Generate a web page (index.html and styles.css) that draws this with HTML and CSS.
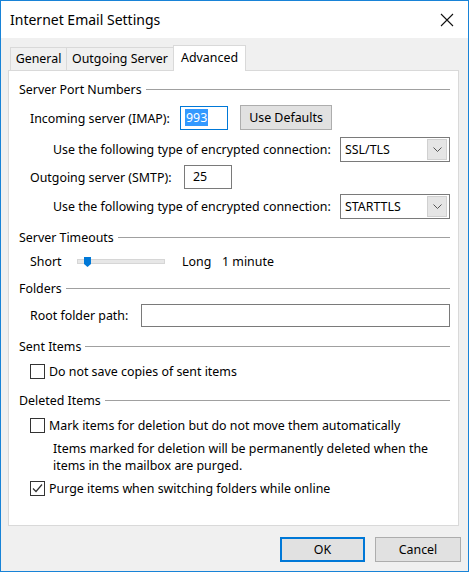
FILE: index.html
```html
<!DOCTYPE html>
<html>
<head>
<meta charset="utf-8">
<link rel="stylesheet" href="styles.css">
</head>
<body>
<div class="window">
  <div class="titlebar">
    <span class="title">Internet Email Settings</span>
    <svg class="close" width="14" height="14" viewBox="0 0 14 14"><path d="M1 1 L13 13 M13 1 L1 13" stroke="#111" stroke-width="1.1" fill="none"/></svg>
  </div>
  <div class="content">
    <div class="tabs">
      <div class="tab t-general">General</div>
      <div class="tab t-outgoing">Outgoing Server</div>
      <div class="tab t-advanced active">Advanced</div>
    </div>
    <div class="panel">
      <div class="group-head h1"><span>Server Port Numbers</span><i></i></div>
      <div class="row r-incoming">
        <span class="lbl w-in">Incoming server (IMAP):</span>
        <div class="input focus in-port"><span class="sel">993</span></div>
        <div class="btn defaults">Use Defaults</div>
      </div>
      <div class="row r-enc1">
        <span class="lbl w-enc">Use the following type of encrypted connection:</span>
        <div class="combo"><span>SSL/TLS</span><b><svg width="9" height="5" viewBox="0 0 9 5"><path d="M0.5 0.5 L4.5 4.5 L8.5 0.5" stroke="#555" fill="none"/></svg></b></div>
      </div>
      <div class="row r-out">
        <span class="lbl w-out">Outgoing server (SMTP):</span>
        <div class="input out-port">25</div>
      </div>
      <div class="row r-enc2">
        <span class="lbl w-enc">Use the following type of encrypted connection:</span>
        <div class="combo"><span>STARTTLS</span><b><svg width="9" height="5" viewBox="0 0 9 5"><path d="M0.5 0.5 L4.5 4.5 L8.5 0.5" stroke="#555" fill="none"/></svg></b></div>
      </div>

      <div class="group-head h2"><span>Server Timeouts</span><i></i></div>
      <div class="row r-slider">
        <span class="lbl w-short">Short</span>
        <div class="track"><svg class="thumb" width="7" height="10" viewBox="0 0 7 10"><path d="M0 0 H7 V7 L3.5 10 L0 7 Z" fill="#0078d7"/></svg></div>
        <span class="lbl w-long">Long</span>
        <span class="lbl">1 minute</span>
      </div>

      <div class="group-head h3"><span>Folders</span><i></i></div>
      <div class="row r-root">
        <span class="lbl w-root">Root folder path:</span>
        <div class="input root"></div>
      </div>

      <div class="group-head h4"><span>Sent Items</span><i></i></div>
      <div class="row r-check c1">
        <span class="box"></span><span class="lbl">Do not save copies of sent items</span>
      </div>

      <div class="group-head h5"><span>Deleted Items</span><i></i></div>
      <div class="row r-check c2">
        <span class="box"></span><span class="lbl">Mark items for deletion but do not move them automatically</span>
      </div>
      <p class="note">Items marked for deletion will be permanently deleted when the<br>items in the mailbox are purged.</p>
      <div class="row r-check c3">
        <span class="box"><svg width="13" height="13" viewBox="0 0 13 13"><path d="M2 6.5 L5 9.5 L11 2.5" stroke="#333" stroke-width="1.2" fill="none"/></svg></span><span class="lbl">Purge items when switching folders while online</span>
      </div>
    </div>
    <div class="buttons">
      <div class="btn ok">OK</div>
      <div class="btn cancel">Cancel</div>
    </div>
  </div>
</div>
</body>
</html>
```

FILE: styles.css
```css
* { box-sizing: border-box; }
html, body { margin: 0; padding: 0; background: #fff; }
body {
  font-family: "Noto Sans", "Open Sans", sans-serif;
  font-size: 12.4px;
  color: #000;
}
.window {
  width: 469px;
  height: 572px;
  border: 1px solid #1883d7;
  display: flex;
  flex-direction: column;
}
.titlebar {
  height: 37px;
  background: #fff;
  display: flex;
  align-items: center;
  justify-content: space-between;
  padding: 0 14px 0 9px;
}
.title { font-size: 14px; line-height: 20px; margin-top: 1px; }
.close { margin-top: 1px; }
.content {
  flex: 1;
  background: #f0f0f0;
  padding: 7px 0 0 7px;
  display: flex;
  flex-direction: column;
}
.tabs {
  display: flex;
  align-items: flex-end;
  height: 25px;
  margin-left: 2px;
}
.tab {
  height: 23px;
  border: 1px solid #d9d9d9;
  border-bottom: none;
  background: #f0f0f0;
  text-align: center;
  line-height: 22px;
  margin-left: -1px;
  white-space: nowrap;
}
.t-general { width: 57px; margin-left: 0; }
.t-outgoing { width: 108px; }
.t-advanced { width: 73px; }
.tab.active {
  height: 26px;
  margin-bottom: -1px;
  background: #fff;
  position: relative;
  z-index: 1;
  line-height: 23px;
}
.panel {
  width: 451px;
  height: 456px;
  border: 1px solid #d9d9d9;
  background: #fff;
  padding: 9px 8px 0 10px;
  display: flex;
  flex-direction: column;
}
.group-head {
  height: 18px;
  display: flex;
  align-items: center;
}
.group-head i {
  flex: 1;
  height: 1px;
  background: #a0a0a0;
  margin-left: 4px;
  margin-top: 1px;
}
.row { display: flex; align-items: center; }
.lbl { white-space: nowrap; flex: none; }
.r-incoming { height: 28px; margin-top: 6px; padding-left: 11px; }
.r-enc1 { height: 28px; margin-top: 3px; padding-left: 34px; }
.r-out { height: 28px; padding-left: 11px; }
.r-enc2 { height: 28px; margin-top: 1px; padding-left: 34px; }
.h2 { margin-top: 8px; }
.r-slider { height: 22px; margin-top: 4px; padding-left: 11px; }
.h3 { margin-top: 7px; }
.r-root { height: 24px; margin-top: 6px; padding-left: 11px; }
.h4 { margin-top: 10px; }
.r-check { height: 18px; padding-left: 11px; }
.c1 { margin-top: 7px; }
.h5 { margin-top: 11px; }
.c2 { margin-top: 7px; }
.c3 { margin-top: 5px; }
.note {
  margin: 6px 0 0 34px;
  line-height: 17px;
  height: 34px;
  white-space: nowrap;
}
.w-in { width: 150px; }
.w-out { width: 154px; }
.w-enc { width: 287px; }
.w-short { width: 47px; }
.w-long { width: 40px; }
.w-root { width: 111px; }
.input {
  height: 24px;
  border: 1px solid #7a7a7a;
  background: #fff;
  padding-left: 8px;
  line-height: 22px;
  flex: none;
}
.input.focus { border-color: #0078d7; }
.in-port { width: 48px; padding-left: 4px; }
.in-port .sel {
  background: #3399ff;
  color: #fff;
  display: inline-block;
  line-height: 17px;
  padding: 0 1px;
  margin-top: 2px;
  vertical-align: top;
}
.out-port { width: 48px; }
.root { width: 309px; height: 23px; }
.btn {
  height: 25px;
  background: #e1e1e1;
  border: 1px solid #adadad;
  text-align: center;
  line-height: 23px;
  flex: none;
}
.defaults { width: 92px; margin-left: 12px; margin-top: -1px; }
.combo {
  width: 110px;
  height: 25px;
  border: 1px solid #7a7a7a;
  background: #fff;
  display: flex;
  align-items: center;
  justify-content: space-between;
  padding: 1px 2px 1px 4px;
  flex: none;
}
.combo b {
  width: 20px;
  height: 21px;
  background: #e5e5e5;
  border: 1px solid #d0d0d0;
  display: flex;
  align-items: center;
  justify-content: center;
}
.track {
  width: 88px;
  height: 5px;
  background: #e7e7e7;
  border: 1px solid #d6d6d6;
  position: relative;
  margin-right: 17px;
}
.thumb {
  position: absolute;
  left: 6px;
  top: -3px;
}
.box {
  width: 15px;
  height: 15px;
  border: 1px solid #333;
  background: #fff;
  margin-right: 4px;
  display: flex;
  align-items: center;
  justify-content: center;
  flex: none;
}
.buttons {
  display: flex;
  justify-content: flex-end;
  gap: 10px;
  margin-top: 11px;
  padding-right: 7px;
}
.ok { width: 85px; border: 2px solid #0078d7; line-height: 21px; }
.cancel { width: 86px; }
```
